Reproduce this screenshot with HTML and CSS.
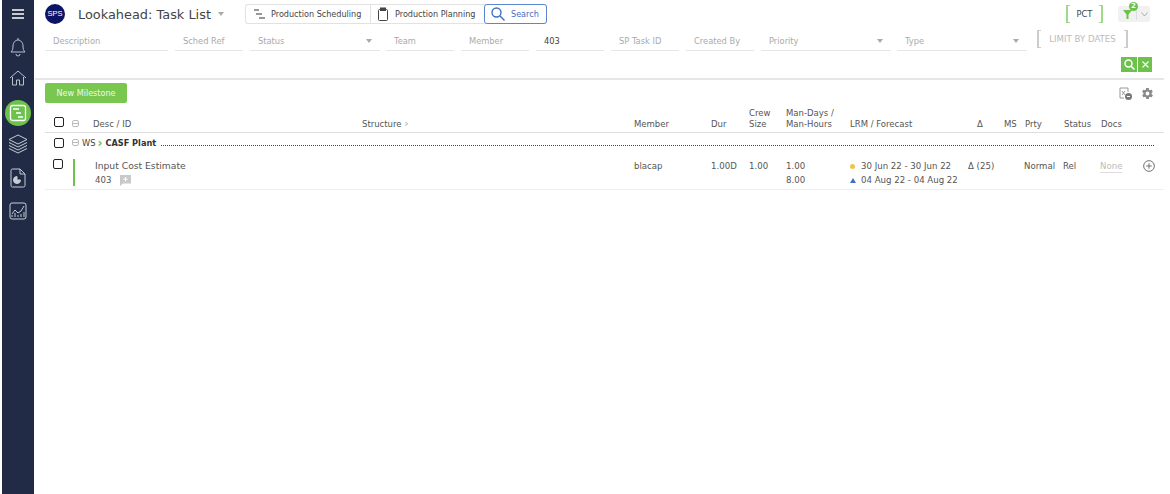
FILE: index.html
```html
<!DOCTYPE html>
<html lang="en">
<head>
    <meta charset="UTF-8">
    <title>Lookahead: Task List</title>
    <link rel="stylesheet" href="styles.css">
</head>
<body>

    <!-- Sidebar -->
    <nav class="sidebar">
        <svg class="side-icon menu-icon" width="14" height="12" viewBox="0 0 14 12"><path d="M1 2h12M1 6h12M1 10h12" stroke="#fff" stroke-width="1.6" fill="none"/></svg>
        <svg class="side-icon" width="18" height="20" viewBox="0 0 18 20" fill="none" stroke="#b9c0cc" stroke-width="1"><path d="M2 15c1.500-1.500 2-3 2-6s2-6 5-6 5 3 5 6 .5 4.500 2 6z"/><path d="M9 1v2M7 17a2 2 0 0 0 4 0"/></svg>
        <svg class="side-icon" width="18" height="18" viewBox="0 0 18 18" fill="none" stroke="#b9c0cc" stroke-width="1"><path d="M1 9l8-7 8 7M3.500 8v8h4v-5h3v5h4V8"/></svg>
        <div class="side-active">
            <svg width="18" height="18" viewBox="0 0 18 18" fill="none" stroke="#fff"><rect x="1.500" y="1.500" width="15" height="15" rx="2" stroke-width="1.300"/><path d="M4 5h6M7 9h5M9 13h5" stroke-width="1.600"/></svg>
        </div>
        <svg class="side-icon" width="22" height="20" viewBox="0 0 22 20" fill="none" stroke="#c6ccd6" stroke-width="1"><path d="M11 1l9 4.500-9 4.500-9-4.500z"/><path d="M2 8.500l9 4.500 9-4.500M2 11.500l9 4.500 9-4.500M2 14.500l9 4.500 9-4.500"/></svg>
        <svg class="side-icon side-gap" width="18" height="20" viewBox="0 0 18 20" fill="none" stroke="#c6ccd6" stroke-width="1"><path d="M2 2.500q0-1.500 1.500-1.500H11l5 5v11.500q0 1.500-1.500 1.500h-11Q2 19 2 17.500zM11 1v5h5"/><path d="M8 8.500a3.500 3.500 0 1 0 3.500 3.500H8z" fill="#c6ccd6"/></svg>
        <svg class="side-icon side-gap" width="18" height="18" viewBox="0 0 18 18" fill="none" stroke="#c6ccd6" stroke-width="1"><rect x="1" y="1" width="16" height="16" rx="2"/><path d="M3 12l3-4 3 3 3-2 3-5M3 15v-2M6 15v-4M9 15v-2M12 15v-3M15 15v-5"/></svg>
    </nav>

    <main class="main">
        <!-- Top bar -->
        <header class="topbar">
            <div class="logo">SPS</div>
            <h1 class="title">Lookahead: Task List</h1>
            <span class="caret title-caret"></span>
            <div class="view-group">
                <div class="view-btn view-sched">
                    <svg width="13" height="12" viewBox="0 0 13 12" fill="none" stroke="#333" stroke-width="1.200"><path d="M1 2h5M3 6h6M6 10h6"/></svg>
                    Production Scheduling
                </div>
                <div class="view-btn view-plan">
                    <svg width="12" height="15" viewBox="0 0 12 15" fill="none" stroke="#444" stroke-width="1"><rect x="1.500" y="2.500" width="9" height="11" rx="1"/><rect x="3.500" y="1" width="5" height="2.500" fill="#444"/></svg>
                    Production Planning
                </div>
                <div class="view-btn view-search">
                    <svg width="14" height="14" viewBox="0 0 14 14" fill="none" stroke="#3f6fc4" stroke-width="1.400"><circle cx="5.500" cy="5.500" r="4.500"/><path d="M9 9l4.500 4.500"/></svg>
                    Search
                </div>
            </div>
            <div class="pct">PCT</div>
            <div class="filter-btn">
                <svg width="9" height="9" viewBox="0 0 9 9"><path d="M0 0h9L5.500 4.500V9h-2V4.500z" fill="#6cc24a"/></svg>
                <span class="filter-badge">2</span>
                <span class="filter-sep"></span>
                <svg width="7" height="5" viewBox="0 0 7 5" fill="none" stroke="#aaa"><path d="M.5 .5l3 3.500 3-3.500"/></svg>
            </div>
        </header>

        <!-- Filters -->
        <section class="filters">
            <div class="field w-desc">Description</div>
            <div class="field w-sm">Sched Ref</div>
            <div class="field w-lg">Status<span class="caret"></span></div>
            <div class="field w-sm">Team</div>
            <div class="field w-sm">Member</div>
            <div class="field w-sm filled">403</div>
            <div class="field w-sm">SP Task ID</div>
            <div class="field w-sm">Created By</div>
            <div class="field w-lg">Priority<span class="caret"></span></div>
            <div class="field w-lg">Type<span class="caret"></span></div>
            <div class="limit">LIMIT BY DATES</div>
        </section>
        <div class="filter-actions">
            <div class="go-btn">
                <svg width="11" height="11" viewBox="0 0 11 11" fill="none" stroke="#fff" stroke-width="1.500"><circle cx="4.500" cy="4.500" r="3.500"/><path d="M7 7l3.500 3.500"/></svg>
            </div>
            <div class="go-btn clear-btn">
                <svg width="7" height="7" viewBox="0 0 7 7" fill="none" stroke="#fff" stroke-width="1.100"><path d="M.5 .5l6 6M6.500 .5l-6 6"/></svg>
            </div>
        </div>

        <!-- Toolbar -->
        <div class="toolbar">
            <button class="new-btn">New Milestone</button>
            <div class="tools">
                <svg width="13" height="13" viewBox="0 0 13 13" fill="none" stroke="#999"><path d="M9 5V1H1v10h4"/><path d="M3 4l3 4M6 4L3 8"/><circle cx="9.500" cy="9.500" r="3.500" fill="#777" stroke="none"/><path d="M8 9.500h3" stroke="#fff"/></svg>
                <svg width="13" height="13" viewBox="0 0 24 24"><path fill="#8a8a8a" d="M19.400 13c.1-.3.100-.7.100-1s0-.7-.1-1l2.100-1.600c.2-.2.200-.4.100-.6l-2-3.500c-.1-.2-.4-.3-.6-.2l-2.500 1c-.5-.4-1.100-.7-1.700-1l-.4-2.600c0-.3-.2-.5-.5-.5h-4c-.3 0-.5.200-.5.400l-.4 2.700c-.6.200-1.200.6-1.700 1l-2.500-1c-.2-.1-.5 0-.6.200l-2 3.500c-.1.200-.1.500.1.600L4.600 11c-.1.300-.1.700-.1 1s0 .7.100 1l-2.100 1.600c-.2.200-.2.400-.1.600l2 3.500c.1.200.4.300.6.200l2.500-1c.5.400 1.100.7 1.700 1l.4 2.600c0 .3.200.5.500.5h4c.3 0 .5-.2.500-.4l.4-2.700c.6-.2 1.200-.6 1.700-1l2.500 1c.2.100.5 0 .6-.2l2-3.500c.1-.2.100-.5-.1-.6zM12 15.500a3.500 3.500 0 1 1 0-7 3.500 3.500 0 0 1 0 7z"/></svg>
            </div>
        </div>

        <!-- Table -->
        <div class="table">
            <div class="grid head">
                <div class="cell-check"><span class="box"></span></div>
                <div><span class="minus"></span></div>
                <div>Desc / ID</div>
                <div>Structure <span class="head-chev">›</span></div>
                <div>Member</div>
                <div>Dur</div>
                <div>Crew<br>Size</div>
                <div>Man-Days /<br>Man-Hours</div>
                <div>LRM / Forecast</div>
                <div>Δ</div>
                <div>MS</div>
                <div>Prty</div>
                <div>Status</div>
                <div>Docs</div>
            </div>

            <div class="group-row">
                <span class="box box-group"></span>
                <span class="minus minus-group"></span>
                <span class="ws">WS</span>
                <span class="chev">›</span>
                <b class="plant">CASF Plant</b>
                <span class="dots"></span>
            </div>

            <div class="grid task">
                <div class="cell-check"><span class="box"></span></div>
                <div class="cell-bar"><span class="bar"></span></div>
                <div>
                    <div class="task-name">Input Cost Estimate</div>
                    <div class="task-id">403
                        <svg width="11" height="11" viewBox="0 0 11 11"><path d="M0 0h11v8.500H3L0 11z" fill="#c9c9c9"/><path d="M5.500 2v4.500M3.200 4.200h4.600" stroke="#fff"/></svg>
                    </div>
                </div>
                <div></div>
                <div>blacap</div>
                <div>1.00D</div>
                <div>1.00</div>
                <div>1.00<div>8.00</div></div>
                <div>
                    <div class="date"><span class="dot"></span>30 Jun 22 - 30 Jun 22</div>
                    <div class="date"><span class="tri"></span>04 Aug 22 - 04 Aug 22</div>
                </div>
                <div class="delta">Δ (25)</div>
                <div></div>
                <div class="prty">Normal</div>
                <div class="stat">Rel</div>
                <div class="docs"><span class="none">None</span>
                    <svg class="add" width="12" height="12" viewBox="0 0 13 13" fill="none" stroke="#666"><circle cx="6.500" cy="6.500" r="5.800"/><path d="M6.500 3.500v6M3.500 6.500h6"/></svg>
                </div>
            </div>
        </div>
    </main>

</body>
</html>
```

FILE: styles.css
```css
/* Global */
body {
    margin: 0;
    height: 494px;
    display: flex;
    overflow: hidden;
    background-color: #fff;
    color: #444;
    font-family: "DejaVu Sans", Verdana, sans-serif;
    font-size: 8.300px;
}

/* Sidebar */
.sidebar {
    width: 32px;
    margin-left: 2px;
    flex-shrink: 0;
    background-color: #212b46;
    display: flex;
    flex-direction: column;
    align-items: center;
}

.side-icon {
    display: block;
    margin-top: 12px;
}

.side-gap {
    margin-top: 14px;
}

.menu-icon {
    margin-top: 8px;
    margin-bottom: 5px;
}

.side-active {
    width: 26px;
    height: 26px;
    margin-top: 13px;
    margin-bottom: -4px;
    border-radius: 50%;
    background-color: #6cc24a;
    display: flex;
    align-items: center;
    justify-content: center;
}

/* Main column */
.main {
    width: 1129px;
    flex-shrink: 0;
    margin-left: 1px;
}

/* Top bar */
.topbar {
    height: 28px;
    padding-left: 10px;
    display: flex;
    align-items: center;
}

.logo {
    width: 20px;
    height: 20px;
    border-radius: 50%;
    background-color: #0c1466;
    color: #fff;
    font-family: "Liberation Sans", Arial, sans-serif;
    font-size: 7.500px;
    line-height: 20px;
    text-align: center;
}

.title {
    margin: 0 0 0 13px;
    width: 133px;
    font-size: 12.900px;
    font-weight: normal;
    color: #444;
    white-space: nowrap;
}

.caret {
    width: 0;
    height: 0;
    border-left: 3.500px solid transparent;
    border-right: 3.500px solid transparent;
    border-top: 4px solid #aaa;
}

.title-caret {
    margin-left: 7px;
}

.view-group {
    margin-left: 21px;
    height: 20px;
    display: flex;
    border: 1px solid #e2e2e2;
    border-right: none;
    border-radius: 3px;
    box-sizing: border-box;
}

.view-btn {
    display: flex;
    align-items: center;
    box-sizing: border-box;
    color: #444;
    font-size: 8.100px;
    white-space: nowrap;
}

.view-sched {
    width: 124px;
    padding-left: 7px;
    gap: 5px;
}

.view-plan {
    width: 114px;
    padding-left: 6px;
    gap: 6px;
    border-left: 1px solid #e2e2e2;
}

.view-search {
    width: 63px;
    margin: -1px 0;
    padding-left: 6px;
    gap: 6px;
    height: 20px;
    color: #3f6fc4;
    border: 1px solid #5b86d0;
    border-radius: 3px;
}

.pct {
    margin-left: 519px;
    width: 37px;
    height: 18px;
    box-sizing: border-box;
    color: #444;
    line-height: 18px;
    text-align: center;
    border-left: 2px solid #9fd98a;
    border-right: 2px solid #9fd98a;
    background:
        linear-gradient(#9fd98a, #9fd98a) 0 0 / 2px 1px no-repeat,
        linear-gradient(#9fd98a, #9fd98a) 0 100% / 2px 1px no-repeat,
        linear-gradient(#9fd98a, #9fd98a) 100% 0 / 2px 1px no-repeat,
        linear-gradient(#9fd98a, #9fd98a) 100% 100% / 2px 1px no-repeat;
}

.filter-btn {
    margin-left: 15px;
    width: 32px;
    height: 16px;
    padding-left: 5px;
    box-sizing: border-box;
    position: relative;
    display: flex;
    align-items: center;
    background-color: #f1f1f1;
    border-radius: 2px;
}

.filter-badge {
    position: absolute;
    left: 11px;
    top: -4px;
    width: 9px;
    height: 9px;
    border-radius: 50%;
    background-color: #6cc24a;
    color: #fff;
    font-size: 7px;
    font-weight: bold;
    line-height: 9px;
    text-align: center;
}

.filter-sep {
    width: 1px;
    height: 12px;
    margin: 0 4px 0 4px;
    background-color: #ddd;
}

/* Filters */
.filters {
    height: 23px;
    padding-left: 10px;
    display: flex;
    gap: 7px;
}

.field {
    box-sizing: border-box;
    height: 23px;
    padding: 8px 8px 0;
    display: flex;
    justify-content: space-between;
    color: #aaa;
    border-bottom: 1px solid #e6e6e6;
    white-space: nowrap;
}

.field .caret {
    margin-top: 3px;
    margin-right: 0;
}

.filled {
    color: #444;
}

.w-desc { width: 123px; }
.w-sm { width: 68px; }
.w-lg { width: 130px; margin-right: -1px; }

.limit {
    margin-left: 4px;
    width: 91px;
    height: 18px;
    margin-top: 2px;
    box-sizing: border-box;
    border-left: 2px solid #ccc;
    border-right: 2px solid #ccc;
    color: #bbb;
    font-size: 8.600px;
    line-height: 18px;
    text-align: center;
    white-space: nowrap;
    background:
        linear-gradient(#ccc, #ccc) 0 0 / 2px 1px no-repeat,
        linear-gradient(#ccc, #ccc) 0 100% / 2px 1px no-repeat,
        linear-gradient(#ccc, #ccc) 100% 0 / 2px 1px no-repeat,
        linear-gradient(#ccc, #ccc) 100% 100% / 2px 1px no-repeat;
}

.filter-actions {
    height: 22px;
    padding: 6px 12px 0 0;
    box-sizing: border-box;
    display: flex;
    justify-content: flex-end;
    gap: 1px;
    margin-bottom: 5px;
}

.go-btn {
    width: 16px;
    height: 15px;
    background-color: #6cc24a;
    display: flex;
    align-items: center;
    justify-content: center;
}

.clear-btn {
    width: 14px;
}

/* Toolbar */
.toolbar {
    border-top: 2px solid #e6e6e6;
    height: 23px;
    padding: 3px 10px 0;
    display: flex;
    justify-content: space-between;
}

.new-btn {
    width: 82px;
    height: 20px;
    padding: 0;
    border: none;
    border-radius: 2px;
    background-color: #7ac74f;
    color: #eef8e8;
    font-family: inherit;
    font-size: 8.100px;
}

.tools {
    display: flex;
    align-self: flex-start;
    gap: 9px;
    padding-top: 4px;
}

/* Table */
.table {
    margin-left: 10px;
}

.grid {
    display: grid;
    grid-template-columns: 27px 21px 269px 272px 77px 38px 37px 64px 127px 27px 21px 39px 37px 63px;
}

.head {
    height: 27px;
    align-items: end;
    color: #555;
    font-size: 8.500px;
    line-height: 11px;
    border-bottom: 1px solid #ddd;
    padding-bottom: 2px;
    box-sizing: border-box;
}

.cell-check {
    padding-left: 9px;
}

.box {
    display: inline-block;
    box-sizing: border-box;
    width: 10px;
    height: 10px;
    border: 1.500px solid #222;
    border-radius: 2px;
}

.minus {
    display: inline-block;
    box-sizing: border-box;
    width: 7px;
    height: 7px;
    border: 1px solid #bbb;
    border-radius: 2px;
    background: linear-gradient(#bbb, #bbb) center / 5px 1px no-repeat;
}

.head-chev {
    color: #aaa;
    font-size: 11px;
    line-height: 10px;
}

/* Group row */
.group-row {
    height: 17px;
    box-sizing: border-box;
    padding-top: 2px;
    display: flex;
    align-items: center;
    padding-left: 9px;
}

.box-group {
    margin-right: 8px;
}

.minus-group {
    margin-right: 3px;
}

.ws {
    margin-right: 2px;
}

.chev {
    margin-right: 3px;
    color: #6cc24a;
    font-size: 12px;
    font-weight: bold;
    line-height: 10px;
}

.plant {
    font-size: 8.200px;
    color: #333;
    white-space: nowrap;
}

.dots {
    flex: 1;
    margin: 5px 10px 0 5px;
    border-top: 1px dotted #444;
}

/* Task row */
.task {
    height: 40px;
    padding-top: 9px;
    box-sizing: border-box;
    line-height: 14px;
    border-bottom: 1px solid #eee;
    color: #555;
    font-size: 8.600px;
}

.bar {
    display: block;
    width: 2px;
    height: 27px;
    margin-left: 1px;
    background-color: #6cc24a;
}

.task .cell-check {
    padding-left: 8px;
}

.task-name {
    font-size: 9.200px;
    margin-left: 2px;
    white-space: nowrap;
}

.task-id {
    margin-left: 2px;
    display: flex;
    align-items: center;
    gap: 9px;
}

.date {
    white-space: nowrap;
    display: flex;
    align-items: center;
}

.dot {
    width: 5px;
    height: 5px;
    margin-right: 6px;
    border-radius: 50%;
    background-color: #f5c242;
}

.tri {
    width: 0;
    height: 0;
    margin-right: 5px;
    border-left: 3px solid transparent;
    border-right: 3px solid transparent;
    border-bottom: 5px solid #3f6fc4;
}

.delta {
    margin-left: -9px;
    white-space: nowrap;
}

.prty {
    margin-left: -1px;
}

.stat {
    margin-left: -1px;
}

.docs {
    display: flex;
    align-items: flex-start;
    justify-content: space-between;
    padding-right: 9px;
}

.none {
    color: #bbb;
    border-bottom: 1px solid #ddd;
    line-height: 12px;
    margin-top: 1px;
    margin-left: -1px;
}

.add {
    margin-top: 1px;
}
```
